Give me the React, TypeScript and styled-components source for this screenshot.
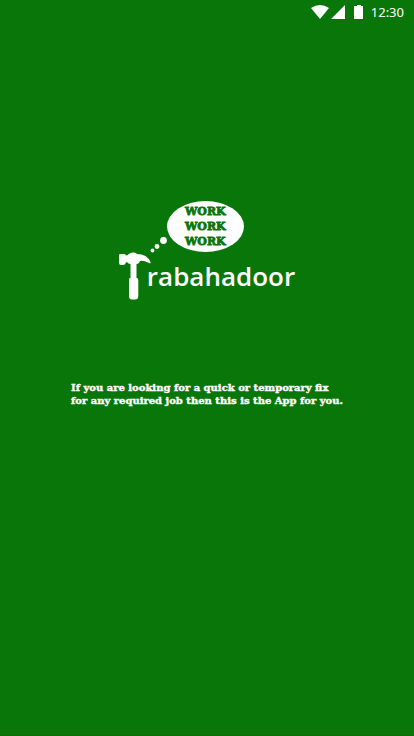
import React from "react";
import styled, { createGlobalStyle } from "styled-components";

const GlobalStyle = createGlobalStyle`
  * { box-sizing: border-box; }
  body { margin: 0; background: #087608; }
`;

const Screen = styled.div`
  min-height: 100vh;
  display: flex;
  flex-direction: column;
  background: #087608;
  border-bottom: 1px solid #0c6c0c;
  color: #fff;
`;

const StatusBar = styled.header`
  height: 24px;
  display: flex;
  align-items: center;
  justify-content: flex-end;
  padding-right: 10px;
  font: 13px/24px "Noto Sans", sans-serif;
`;

const StatusIcons = styled.svg`
  width: 54px;
  height: 16px;
  margin-right: 6px;
`;

const Content = styled.main`
  flex: 1;
  display: flex;
  flex-direction: column;
  align-items: center;
  padding-top: 177px;
`;

const Logo = styled.div`
  display: grid;
  grid-template-columns: 28px 20px auto;
  grid-template-rows: 51px 48px;
`;

const Hammer = styled.svg`
  grid-area: 1 / 1 / 3 / 3;
  width: 48px;
  height: 99px;
`;

const Bubble = styled.div`
  grid-area: 1 / 3;
  width: 77px;
  height: 51px;
  border-radius: 50%;
  background: #fff;
  color: #087608;
  display: flex;
  flex-direction: column;
  align-items: center;
  justify-content: center;
  font: 900 11px/15px "Cooper Black", "DejaVu Serif", serif;
  -webkit-text-stroke: 0.8px #087608;
`;

const Wordmark = styled.h1`
  grid-area: 2 / 2 / 3 / 4;
  margin: 0;
  font: 600 26px/48px "Trebuchet MS", "Open Sans", sans-serif;
`;

const Tagline = styled.p`
  margin: 81px 0 0;
  font: 900 10px/13px "Cooper Black", "DejaVu Serif", serif;
  -webkit-text-stroke: 0.4px #fff;
  white-space: pre-line;
`;

export default function App() {
  return (
    <>
      <GlobalStyle />
      <Screen>
        <StatusBar>
          <StatusIcons viewBox="0 0 54 16" fill="#fff" aria-hidden="true">
            <path d="M0 4Q9 -2 18 4L9 15Z" />
            <path d="M34 1V15H20Z" />
            <path d="M43 2h3V1h4v1h2v13h-9Z" />
          </StatusIcons>
          <time>12:30</time>
        </StatusBar>
        <Content>
          <Logo>
            <Hammer viewBox="0 0 48 99" fill="#fff" aria-hidden="true">
              <path d="M0 54Q0 53 1 53H5Q7 53 7 54.500L9 54Q10 52 14 51.500Q17 51 18 53Q28 53 31.500 61Q32 63 30 62Q24 59 21 60Q20 63 17.500 63V78H11.500V63Q9 63 8 61L7 61.500Q6 64 4 64H2Q0 64 0 62Z" />
              <path d="M10.500 77H18.500L19.300 79V95Q19.300 98.500 16 98.500H13Q10 98.500 10 95V79Z" />
              <circle cx="33.500" cy="49.500" r="1.900" />
              <circle cx="38" cy="45.500" r="2.400" />
              <circle cx="44.500" cy="39.500" r="3.400" />
            </Hammer>
            <Bubble>
              <span>WORK</span>
              <span>WORK</span>
              <span>WORK</span>
            </Bubble>
            <Wordmark>rabahadoor</Wordmark>
          </Logo>
          <Tagline>
            {"If you are looking for a quick or temporary fix\nfor any required job then this is the App for you."}
          </Tagline>
        </Content>
      </Screen>
    </>
  );
}
